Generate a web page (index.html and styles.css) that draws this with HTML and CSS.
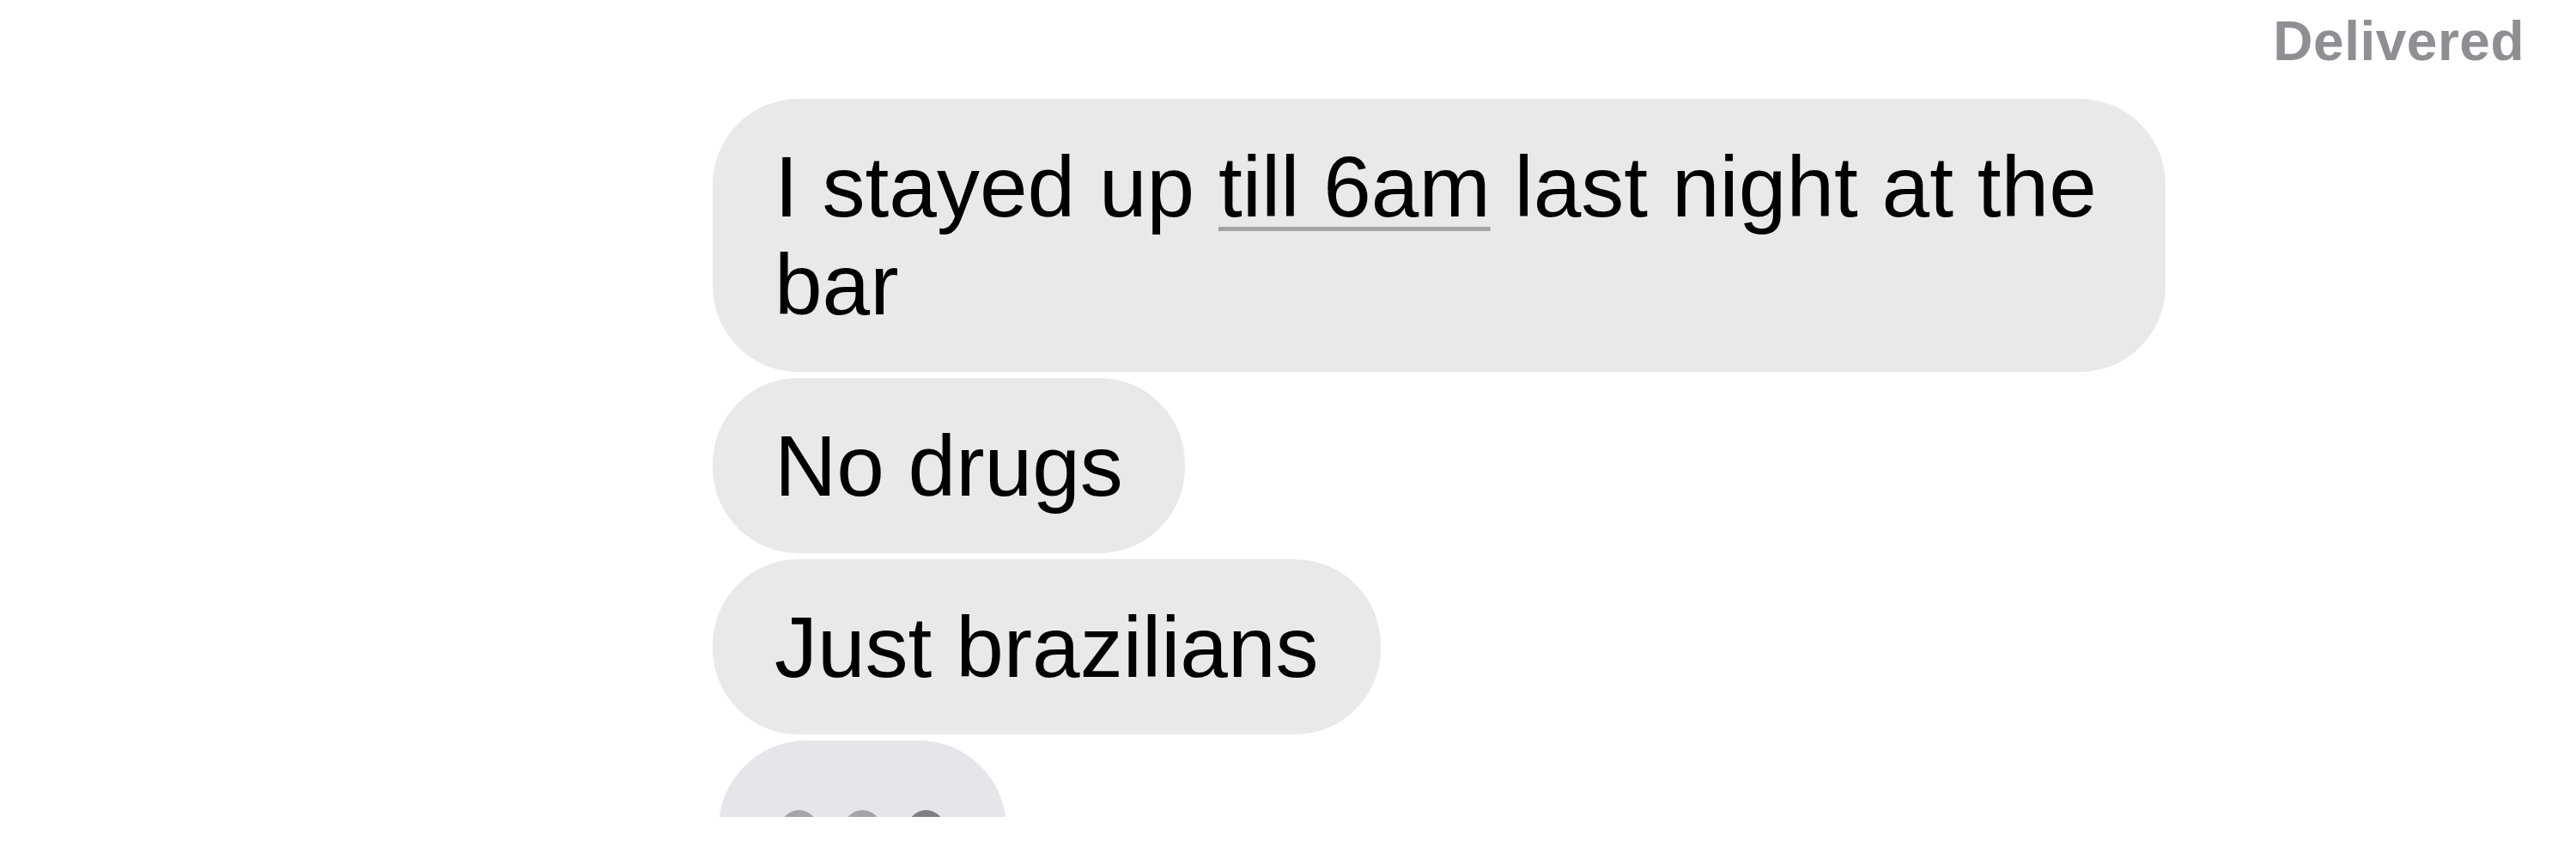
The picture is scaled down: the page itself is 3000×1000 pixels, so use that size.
FILE: index.html
```html
<!DOCTYPE html>
<html lang="en">
<head>
<meta charset="utf-8">
<title>Messages</title>
<link rel="stylesheet" href="styles.css">
</head>
<body>
<main class="screen">
  <div class="status">Delivered</div>
  <section class="thread">
    <div class="bubble">I stayed up <span class="link">till 6am</span> last night at the bar</div>
    <div class="bubble">No drugs</div>
    <div class="bubble">Just brazilians</div>
    <div class="bubble typing">
      <span class="dot"></span>
      <span class="dot"></span>
      <span class="dot dark"></span>
    </div>
  </section>
</main>
</body>
</html>
```

FILE: styles.css
```css
html, body {
  margin: 0;
  padding: 0;
  background: #ffffff;
}

.screen {
  width: 3000px;
  height: 951px;
  overflow: hidden;
  font-family: "Liberation Sans", Arial, Helvetica, sans-serif;
  display: flex;
  flex-direction: column;
}

.status {
  margin-top: 16px;
  padding-right: 60px;
  text-align: right;
  font-size: 64px;
  line-height: 64px;
  font-weight: 700;
  letter-spacing: 0.5px;
  color: #8e8e93;
}

.thread {
  margin-top: 35px;
  padding-left: 830px;
  display: flex;
  flex-direction: column;
  align-items: flex-start;
  gap: 7px;
}

.bubble {
  box-sizing: border-box;
  max-width: 1692px;
  padding: 45px 72px;
  background: #e9e9eb;
  border-radius: 100px;
  color: #000000;
  font-size: 100px;
  line-height: 114px;
}

.link {
  text-decoration: underline;
  text-decoration-color: #a3a3a7;
  text-decoration-thickness: 5px;
  text-underline-offset: 12px;
  text-decoration-skip-ink: none;
}

.typing {
  margin-left: 7px;
  height: 204px;
  padding: 0 72px;
  background: #e5e5ea;
  border-radius: 102px;
  display: flex;
  align-items: center;
  gap: 31px;
}

.dot {
  width: 43px;
  height: 43px;
  border-radius: 50%;
  background: #a5a5a9;
}

.dot.dark {
  background: #7f7f83;
}
```
